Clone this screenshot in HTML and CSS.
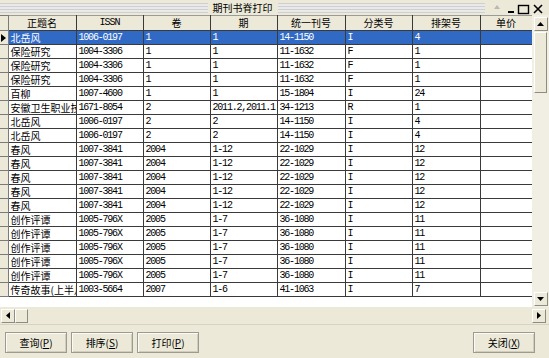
FILE: index.html
```html
<!DOCTYPE html>
<html lang="zh">
<head>
  <meta charset="UTF-8" />
  <title>期刊书脊打印</title>
  <link rel="stylesheet" href="styles.css">
</head>
<body>

  <div class="titlebar">
    <div class="stripes"></div>
    <div class="title">期刊书脊打印</div>
    <div class="stripes"></div>
    <div class="controls">
      <svg width="64" height="15" viewBox="0 0 64 15">
        <path d="M9 9 L12 5 L15 9 Z" fill="#b8b8b8"/>
        <rect x="23" y="11" width="6" height="2" fill="#000"/>
        <rect x="33.5" y="5.5" width="10" height="8" fill="none" stroke="#000" stroke-width="1.4"/>
        <path d="M49 5 L57 13 M57 5 L49 13" stroke="#000" stroke-width="1.6"/>
      </svg>
    </div>
  </div>

  <div class="grid-wrap">
    <div class="grid-view">
      <table class="grid">
        <colgroup>
          <col class="c-ind"><col class="c-68"><col class="c-67"><col class="c-67"><col class="c-67">
          <col class="c-68"><col class="c-67"><col class="c-68"><col class="c-52">
        </colgroup>
        <thead>
          <tr><th class="ind"></th><th>正题名</th><th>ISSN</th><th>卷</th><th>期</th><th>统一刊号</th><th>分类号</th><th>排架号</th><th>单价</th></tr>
        </thead>
        <tbody>
          <tr class="selected"><td class="ind"><span class="pointer"></span></td><td>北岳风</td><td>1006-0197</td><td>1</td><td>1</td><td>14-1150</td><td>I</td><td>4</td><td></td></tr>
          <tr><td class="ind"></td><td>保险研究</td><td>1004-3306</td><td>1</td><td>1</td><td>11-1632</td><td>F</td><td>1</td><td></td></tr>
          <tr><td class="ind"></td><td>保险研究</td><td>1004-3306</td><td>1</td><td>1</td><td>11-1632</td><td>F</td><td>1</td><td></td></tr>
          <tr><td class="ind"></td><td>保险研究</td><td>1004-3306</td><td>1</td><td>1</td><td>11-1632</td><td>F</td><td>1</td><td></td></tr>
          <tr><td class="ind"></td><td>百柳</td><td>1007-4600</td><td>1</td><td>1</td><td>15-1804</td><td>I</td><td>24</td><td></td></tr>
          <tr><td class="ind"></td><td>安徽卫生职业技术学院学报</td><td>1671-8054</td><td>2</td><td>2011.2,2011.1</td><td>34-1213</td><td>R</td><td>1</td><td></td></tr>
          <tr><td class="ind"></td><td>北岳风</td><td>1006-0197</td><td>2</td><td>2</td><td>14-1150</td><td>I</td><td>4</td><td></td></tr>
          <tr><td class="ind"></td><td>北岳风</td><td>1006-0197</td><td>2</td><td>2</td><td>14-1150</td><td>I</td><td>4</td><td></td></tr>
          <tr><td class="ind"></td><td>春风</td><td>1007-3841</td><td>2004</td><td>1-12</td><td>22-1029</td><td>I</td><td>12</td><td></td></tr>
          <tr><td class="ind"></td><td>春风</td><td>1007-3841</td><td>2004</td><td>1-12</td><td>22-1029</td><td>I</td><td>12</td><td></td></tr>
          <tr><td class="ind"></td><td>春风</td><td>1007-3841</td><td>2004</td><td>1-12</td><td>22-1029</td><td>I</td><td>12</td><td></td></tr>
          <tr><td class="ind"></td><td>春风</td><td>1007-3841</td><td>2004</td><td>1-12</td><td>22-1029</td><td>I</td><td>12</td><td></td></tr>
          <tr><td class="ind"></td><td>春风</td><td>1007-3841</td><td>2004</td><td>1-12</td><td>22-1029</td><td>I</td><td>12</td><td></td></tr>
          <tr><td class="ind"></td><td>创作评谭</td><td>1005-796X</td><td>2005</td><td>1-7</td><td>36-1080</td><td>I</td><td>11</td><td></td></tr>
          <tr><td class="ind"></td><td>创作评谭</td><td>1005-796X</td><td>2005</td><td>1-7</td><td>36-1080</td><td>I</td><td>11</td><td></td></tr>
          <tr><td class="ind"></td><td>创作评谭</td><td>1005-796X</td><td>2005</td><td>1-7</td><td>36-1080</td><td>I</td><td>11</td><td></td></tr>
          <tr><td class="ind"></td><td>创作评谭</td><td>1005-796X</td><td>2005</td><td>1-7</td><td>36-1080</td><td>I</td><td>11</td><td></td></tr>
          <tr><td class="ind"></td><td>创作评谭</td><td>1005-796X</td><td>2005</td><td>1-7</td><td>36-1080</td><td>I</td><td>11</td><td></td></tr>
          <tr><td class="ind"></td><td>传奇故事(上半月)</td><td>1003-5664</td><td>2007</td><td>1-6</td><td>41-1063</td><td>I</td><td>7</td><td></td></tr>
        </tbody>
      </table>
    </div>
    <div class="vscroll">
      <div class="sb-btn">
        <svg width="7" height="4" viewBox="0 0 7 4"><path d="M0 4 L3.5 0 L7 4 Z" fill="#000"/></svg>
      </div>
      <div class="vthumb"></div>
      <div class="track"></div>
      <div class="sb-btn">
        <svg width="7" height="4" viewBox="0 0 7 4"><path d="M0 0 L3.5 4 L7 0 Z" fill="#000"/></svg>
      </div>
    </div>
  </div>

  <div class="hscroll">
    <div class="sb-btn">
      <svg width="4" height="7" viewBox="0 0 4 7"><path d="M4 0 L0 3.5 L4 7 Z" fill="#000"/></svg>
    </div>
    <div class="hthumb"></div>
    <div class="track"></div>
    <div class="sb-btn">
      <svg width="4" height="7" viewBox="0 0 4 7"><path d="M0 0 L4 3.5 L0 7 Z" fill="#000"/></svg>
    </div>
  </div>

  <div class="button-bar">
    <button class="btn">查询(<u>P</u>)</button>
    <button class="btn">排序(<u>S</u>)</button>
    <button class="btn">打印(<u>P</u>)</button>
    <div class="spacer"></div>
    <button class="btn">关闭(<u>X</u>)</button>
  </div>

</body>
</html>
```

FILE: styles.css
```css
body {
  margin: 0;
  width: 549px;
  height: 358px;
  overflow: hidden;
  background: #ece9d8;
  font-family: "Liberation Mono", "Noto Sans CJK SC", monospace;
  font-size: 10px;
  color: #000;
}

/* title bar */
.titlebar {
  display: flex;
  align-items: center;
  height: 15px;
}
.stripes {
  flex: 1;
  height: 10px;
  background: repeating-linear-gradient(to bottom, #cfcfcf 0 1px, #e9e9e9 1px 3px);
}
.title {
  width: 70px;
  text-align: center;
  font-family: "Noto Sans CJK SC", sans-serif;
  font-size: 10px;
  line-height: 15px;
}
.controls {
  width: 64px;
  height: 15px;
}
.controls svg {
  display: block;
}

/* data grid */
.grid-wrap {
  display: flex;
  height: 292px;
}
.grid-view {
  width: 532px;
  background: #fff;
  overflow: hidden;
}
.grid {
  border-collapse: collapse;
  table-layout: fixed;
  width: 532px;
}
.c-ind { width: 8px; }
.c-68 { width: 68px; }
.c-67 { width: 67px; }
.c-52 { width: 52px; }
.grid tr {
  height: 14px;
}
.grid th,
.grid td {
  border: 1px solid #3a3a3a;
  padding: 0 2px;
  white-space: nowrap;
  overflow: hidden;
  line-height: 12px;
  text-align: left;
  letter-spacing: -1.2px;
}
.grid td:nth-child(2),
.grid th {
  letter-spacing: 0;
  font-family: "Noto Sans CJK SC", sans-serif;
}
.grid th {
  height: 14px;
  background: #ece9d8;
  font-weight: normal;
  text-align: center;
  border-top-color: #9a9a9a;
}
.grid th:nth-child(3) {
  font-family: "Liberation Mono", monospace;
  letter-spacing: -1px;
}
.grid .ind {
  padding: 0;
  background: #ece9d8;
  border-color: #7a7a7a;
  border-left: none;
}
.grid tr.selected td {
  background: #316ac5;
  color: #fff;
}
.grid tr.selected td.ind {
  background: #ece9d8;
}
.pointer {
  display: block;
  width: 0;
  height: 0;
  margin-left: 1px;
  border-top: 4px solid transparent;
  border-bottom: 4px solid transparent;
  border-left: 5px solid #000;
}

/* scroll bars */
.vscroll {
  width: 17px;
  display: flex;
  flex-direction: column;
  align-items: center;
  padding: 2px 0 1px;
  box-sizing: border-box;
  background: #f1efe3;
}
.sb-btn {
  width: 12px;
  height: 12px;
  display: flex;
  align-items: center;
  justify-content: center;
  background: #ece9d8;
  border: 1px solid;
  border-color: #fff #8e8c80 #8e8c80 #fff;
  flex: none;
}
.vthumb {
  width: 13px;
  height: 61px;
  margin-top: 1px;
  background: #ece9d8;
  border: 1px solid;
  border-color: #fff #8e8c80 #8e8c80 #fff;
  box-sizing: border-box;
}
.track {
  flex: 1;
}
.hscroll {
  display: flex;
  align-items: center;
  height: 17px;
  padding: 0 3px 0 1px;
}
.hthumb {
  width: 13px;
  height: 14px;
  box-sizing: border-box;
  background: #ece9d8;
  border: 1px solid;
  border-color: #fff #8e8c80 #8e8c80 #fff;
}

/* bottom buttons */
.button-bar {
  display: flex;
  gap: 4px;
  border-top: 1px solid #d6d3c4;
  padding: 7px 14px 0 5px;
}
.spacer {
  flex: 1;
}
.btn {
  width: 62px;
  height: 21px;
  padding: 0;
  background: #ece9d8;
  border: 1px solid #9d9b8f;
  box-shadow: inset 1px 1px #fbfaf6, inset -1px -1px #d0cdbe;
  font-family: "Noto Sans CJK SC", sans-serif;
  font-size: 10px;
  color: #000;
}
```
